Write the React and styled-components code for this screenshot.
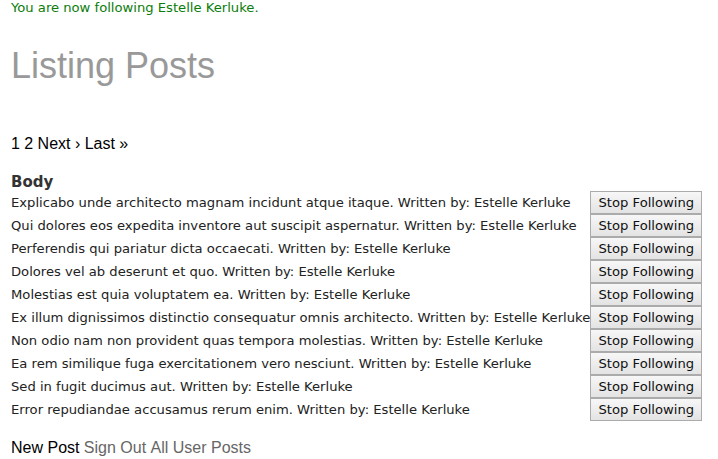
import React from "react";
import styled, { createGlobalStyle } from "styled-components";

const Global = createGlobalStyle`
  html, body { margin: 0; padding: 0; background: #fff; }
  body { font-family: "DejaVu Sans", Verdana, sans-serif; }
`;

const Page = styled.div`
  padding: 0 11px;
`;

const Notice = styled.p`
  margin: 0;
  font-size: 13.15px;
  line-height: 15px;
  color: #0b7d0b;
`;

const Title = styled.h1`
  margin: 30px 0 0;
  font-family: "Liberation Sans", Arial, sans-serif;
  font-weight: normal;
  font-size: 36px;
  line-height: 42px;
  color: #999;
`;

const Pager = styled.nav`
  margin-top: 48px;
  display: flex;
  gap: 4.4px;
  font-family: "Liberation Sans", Arial, sans-serif;
  font-size: 16px;
  line-height: 18px;
  color: #000;
`;

const Heading = styled.h3`
  margin: 20px 0 0;
  font-size: 15px;
  line-height: 18px;
  font-weight: bold;
  color: #333;
`;

const Table = styled.div`
  display: grid;
  grid-template-columns: max-content max-content;
  row-gap: 1px;
`;

const Cell = styled.div`
  height: 22px;
  display: flex;
  align-items: center;
  font-size: 13.15px;
  color: #222;
  white-space: nowrap;
`;

const Button = styled.button`
  box-sizing: border-box;
  width: 112px;
  height: 23px;
  margin-top: -1px;
  padding: 0;
  border: 1px solid #ababab;
  background: linear-gradient(#f7f7f7, #e3e3e3);
  font-family: "DejaVu Sans", Verdana, sans-serif;
  font-size: 13.15px;
  color: #111;
  position: relative;
  top: 1px;
`;

const Footer = styled.div`
  margin-top: 19px;
  display: flex;
  gap: 4.4px;
  font-family: "Liberation Sans", Arial, sans-serif;
  font-size: 16px;
  line-height: 18px;
`;

const FooterLink = styled.span`
  color: ${(p) => (p.$primary ? "#000" : "#666")};
`;

const posts = [
  "Explicabo unde architecto magnam incidunt atque itaque.",
  "Qui dolores eos expedita inventore aut suscipit aspernatur.",
  "Perferendis qui pariatur dicta occaecati.",
  "Dolores vel ab deserunt et quo.",
  "Molestias est quia voluptatem ea.",
  "Ex illum dignissimos distinctio consequatur omnis architecto.",
  "Non odio nam non provident quas tempora molestias.",
  "Ea rem similique fuga exercitationem vero nesciunt.",
  "Sed in fugit ducimus aut.",
  "Error repudiandae accusamus rerum enim.",
];

export default function App() {
  return (
    <Page>
      <Global />
      <Notice>You are now following Estelle Kerluke.</Notice>
      <Title>Listing Posts</Title>
      <Pager>
        <span>1</span>
        <span>2</span>
        <span>Next ›</span>
        <span>Last »</span>
      </Pager>
      <Heading>Body</Heading>
      <Table>
        {posts.map((p, i) => (
          <React.Fragment key={i}>
            <Cell>{p} Written by: Estelle Kerluke</Cell>
            <Cell>
              <Button>Stop Following</Button>
            </Cell>
          </React.Fragment>
        ))}
      </Table>
      <Footer>
        <FooterLink $primary>New Post</FooterLink>
        <FooterLink>Sign Out</FooterLink>
        <FooterLink>All User Posts</FooterLink>
      </Footer>
    </Page>
  );
}
